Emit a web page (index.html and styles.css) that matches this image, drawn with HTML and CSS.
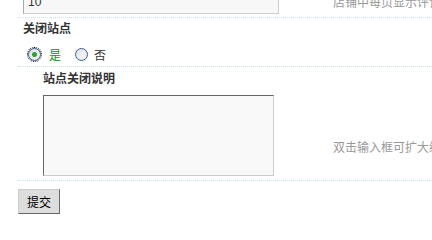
FILE: index.html
```html
<!DOCTYPE html>
<html lang="zh">
<head>
<meta charset="utf-8">
<title>站点设置</title>
<link rel="stylesheet" href="styles.css">
</head>
<body>
<div class="page">
  <div class="row row-first dotted">
    <div class="cell form form-narrow"><input class="txt" type="text" value="10"></div>
    <div class="cell tips tips-first">店铺中每页显示评论数量</div>
  </div>
  <div class="row label-row"><label class="req">关闭站点</label></div>
  <div class="row radios dotted">
    <label class="opt"><input class="radio focus" type="radio" name="close" checked><span class="yes">是</span></label>
    <label class="opt"><input class="radio" type="radio" name="close"><span class="no">否</span></label>
  </div>
  <div class="row label-row label-indent"><label class="req">站点关闭说明</label></div>
  <div class="row area-row dotted">
    <div class="cell form form-indent"><textarea class="area"></textarea></div>
    <div class="cell tips tips-area">双击输入框可扩大编辑区域</div>
  </div>
  <div class="foot"><button class="btn" type="button">提交</button></div>
</div>
</body>
</html>
```

FILE: styles.css
```css
html, body {
  margin: 0;
  padding: 0;
  overflow: hidden;
  background: #fff;
}
body {
  font-family: "Noto Sans CJK SC", "Liberation Sans", sans-serif;
  font-size: 12px;
  color: #333;
}
.page {
  width: 700px;
  padding-left: 18px;
}
.row {
  display: flex;
}
.dotted {
  border-bottom: 1px dotted #cddfeb;
}
.cell.form {
  width: 315px;
  box-sizing: border-box;
}
.form-narrow {
  padding-left: 5px;
}
.form-indent {
  padding-left: 25px;
}
.row-first {
  margin-top: -11px;
  padding-bottom: 3px;
}
.txt {
  display: block;
  box-sizing: border-box;
  width: 256px;
  height: 25px;
  margin: 0;
  padding: 0 4px;
  border: 1px solid;
  border-color: #aaa #ccc #ccc #aaa;
  background: #f7f7f7;
  font-family: "Liberation Sans", sans-serif;
  font-size: 12px;
  color: #333;
  outline: none;
}
.tips {
  color: #999;
  line-height: 16px;
  white-space: nowrap;
}
.tips-first {
  padding-top: 5px;
}
.label-row {
  padding-top: 2px;
  padding-left: 5px;
  line-height: 16px;
}
.label-row .req {
  font-weight: bold;
  color: #333;
}
.label-indent {
  padding-top: 3px;
  padding-left: 25px;
}
.radios {
  padding: 12px 0 5px 5px;
  align-items: center;
}
.opt {
  display: flex;
  align-items: center;
  height: 13px;
  line-height: 13px;
}
.radio {
  -webkit-appearance: none;
  appearance: none;
  box-sizing: border-box;
  width: 13px;
  height: 13px;
  margin: 0 8px 0 5px;
  border: 1px solid #3f6187;
  border-radius: 50%;
  background: radial-gradient(circle at 60% 60%, #f6f6f6 0, #e2e5ea 70%, #cbd1d8 100%);
  position: relative;
}
.radio:checked::after {
  content: "";
  position: absolute;
  left: 3px;
  top: 3px;
  width: 5px;
  height: 5px;
  border-radius: 50%;
  background: #2aa52a;
}
.radio.focus {
  outline: 1px dotted #000;
  outline-offset: 0;
}
.yes {
  color: #090;
  margin-right: 9px;
}
.no {
  color: #333;
  margin-left: -2px;
}
.area-row {
  padding-top: 9px;
  padding-bottom: 4px;
}
.area {
  display: block;
  box-sizing: border-box;
  width: 231px;
  height: 81px;
  margin: 0;
  padding: 2px;
  border: 1px solid;
  border-color: #666 #ccc #ccc #666;
  background: #f9f9f9;
  resize: none;
  outline: none;
}
.tips-area {
  padding-top: 44px;
}
.foot {
  padding-top: 8px;
}
.btn {
  box-sizing: border-box;
  height: 25px;
  width: 42px;
  padding: 0;
  margin: 0;
  border: 1px solid;
  border-color: #ccc #666 #666 #ccc;
  background: #ddd;
  font-family: "Noto Sans CJK SC", sans-serif;
  font-size: 12px;
  color: #000;
}
```
